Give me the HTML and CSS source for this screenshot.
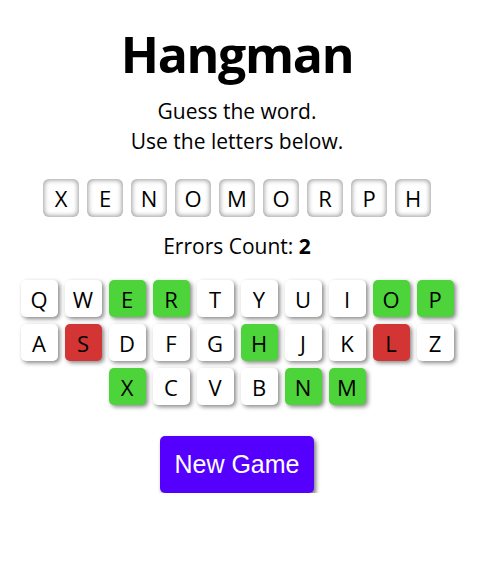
FILE: index.html
```html
<!DOCTYPE html>
<html>
<head>
<meta charset="utf-8">
<link rel="stylesheet" href="styles.css">
</head>
<body>
<main class="app">
  <h1 class="title">Hangman</h1>
  <p class="intro">Guess the word.<br>Use the letters below.</p>
  <div class="word">
    <span class="tile">X</span><span class="tile">E</span><span class="tile">N</span><span class="tile">O</span><span class="tile">M</span><span class="tile">O</span><span class="tile">R</span><span class="tile">P</span><span class="tile">H</span>
  </div>
  <p class="errors">Errors Count: <b>2</b></p>
  <div class="keyboard">
    <div class="row">
      <span class="key">Q</span><span class="key">W</span><span class="key hit">E</span><span class="key hit">R</span><span class="key">T</span><span class="key">Y</span><span class="key">U</span><span class="key">I</span><span class="key hit">O</span><span class="key hit">P</span>
    </div>
    <div class="row">
      <span class="key">A</span><span class="key miss">S</span><span class="key">D</span><span class="key">F</span><span class="key">G</span><span class="key hit">H</span><span class="key">J</span><span class="key">K</span><span class="key miss">L</span><span class="key">Z</span>
    </div>
    <div class="row">
      <span class="key hit">X</span><span class="key">C</span><span class="key">V</span><span class="key">B</span><span class="key hit">N</span><span class="key hit">M</span>
    </div>
  </div>
  <button class="new-game">New Game</button>
</main>
</body>
</html>
```
FILE: styles.css
```css
html, body {
  margin: 0;
  padding: 0;
  background: #fff;
}
body {
  font-family: "Open Sans", "Noto Sans", sans-serif;
  color: #000;
}
.app {
  width: 474px;
  display: flex;
  flex-direction: column;
  align-items: center;
}
.title {
  margin: 23px 0 0;
  font-size: 50px;
  line-height: 62px;
  font-weight: 700;
  letter-spacing: -1.3px;
}
.intro {
  margin: 11px 0 0;
  font-size: 21px;
  line-height: 30px;
  text-align: center;
}
.word {
  margin-top: 23px;
  display: flex;
  gap: 8px;
}
.tile {
  width: 36px;
  height: 38px;
  border-radius: 6px;
  box-shadow: inset 0 0 5px 1px #9a9a9a;
  display: flex;
  align-items: center;
  justify-content: center;
  font-size: 22px;
}
.errors {
  margin: 16px 0 0;
  font-size: 21px;
  line-height: 26px;
}
.errors b {
  font-weight: 700;
}
.keyboard {
  margin-top: 21px;
  display: flex;
  flex-direction: column;
  align-items: center;
  gap: 7px;
}
.row {
  display: flex;
  gap: 7px;
}
.key {
  width: 37px;
  height: 37px;
  border-radius: 5px;
  background: #fff;
  box-shadow: 2px 2px 4px #888;
  display: flex;
  align-items: center;
  justify-content: center;
  font-size: 22px;
}
.key.hit {
  background: #4cd43a;
}
.key.miss {
  background: #d33434;
}
.new-game {
  margin-top: 31px;
  width: 154px;
  height: 57px;
  border: none;
  border-radius: 5px;
  background: #5500ff;
  color: #fff;
  font-family: "Liberation Sans", Arial, sans-serif;
  font-size: 25px;
  box-shadow: 2px 3px 4px #777;
}
```
